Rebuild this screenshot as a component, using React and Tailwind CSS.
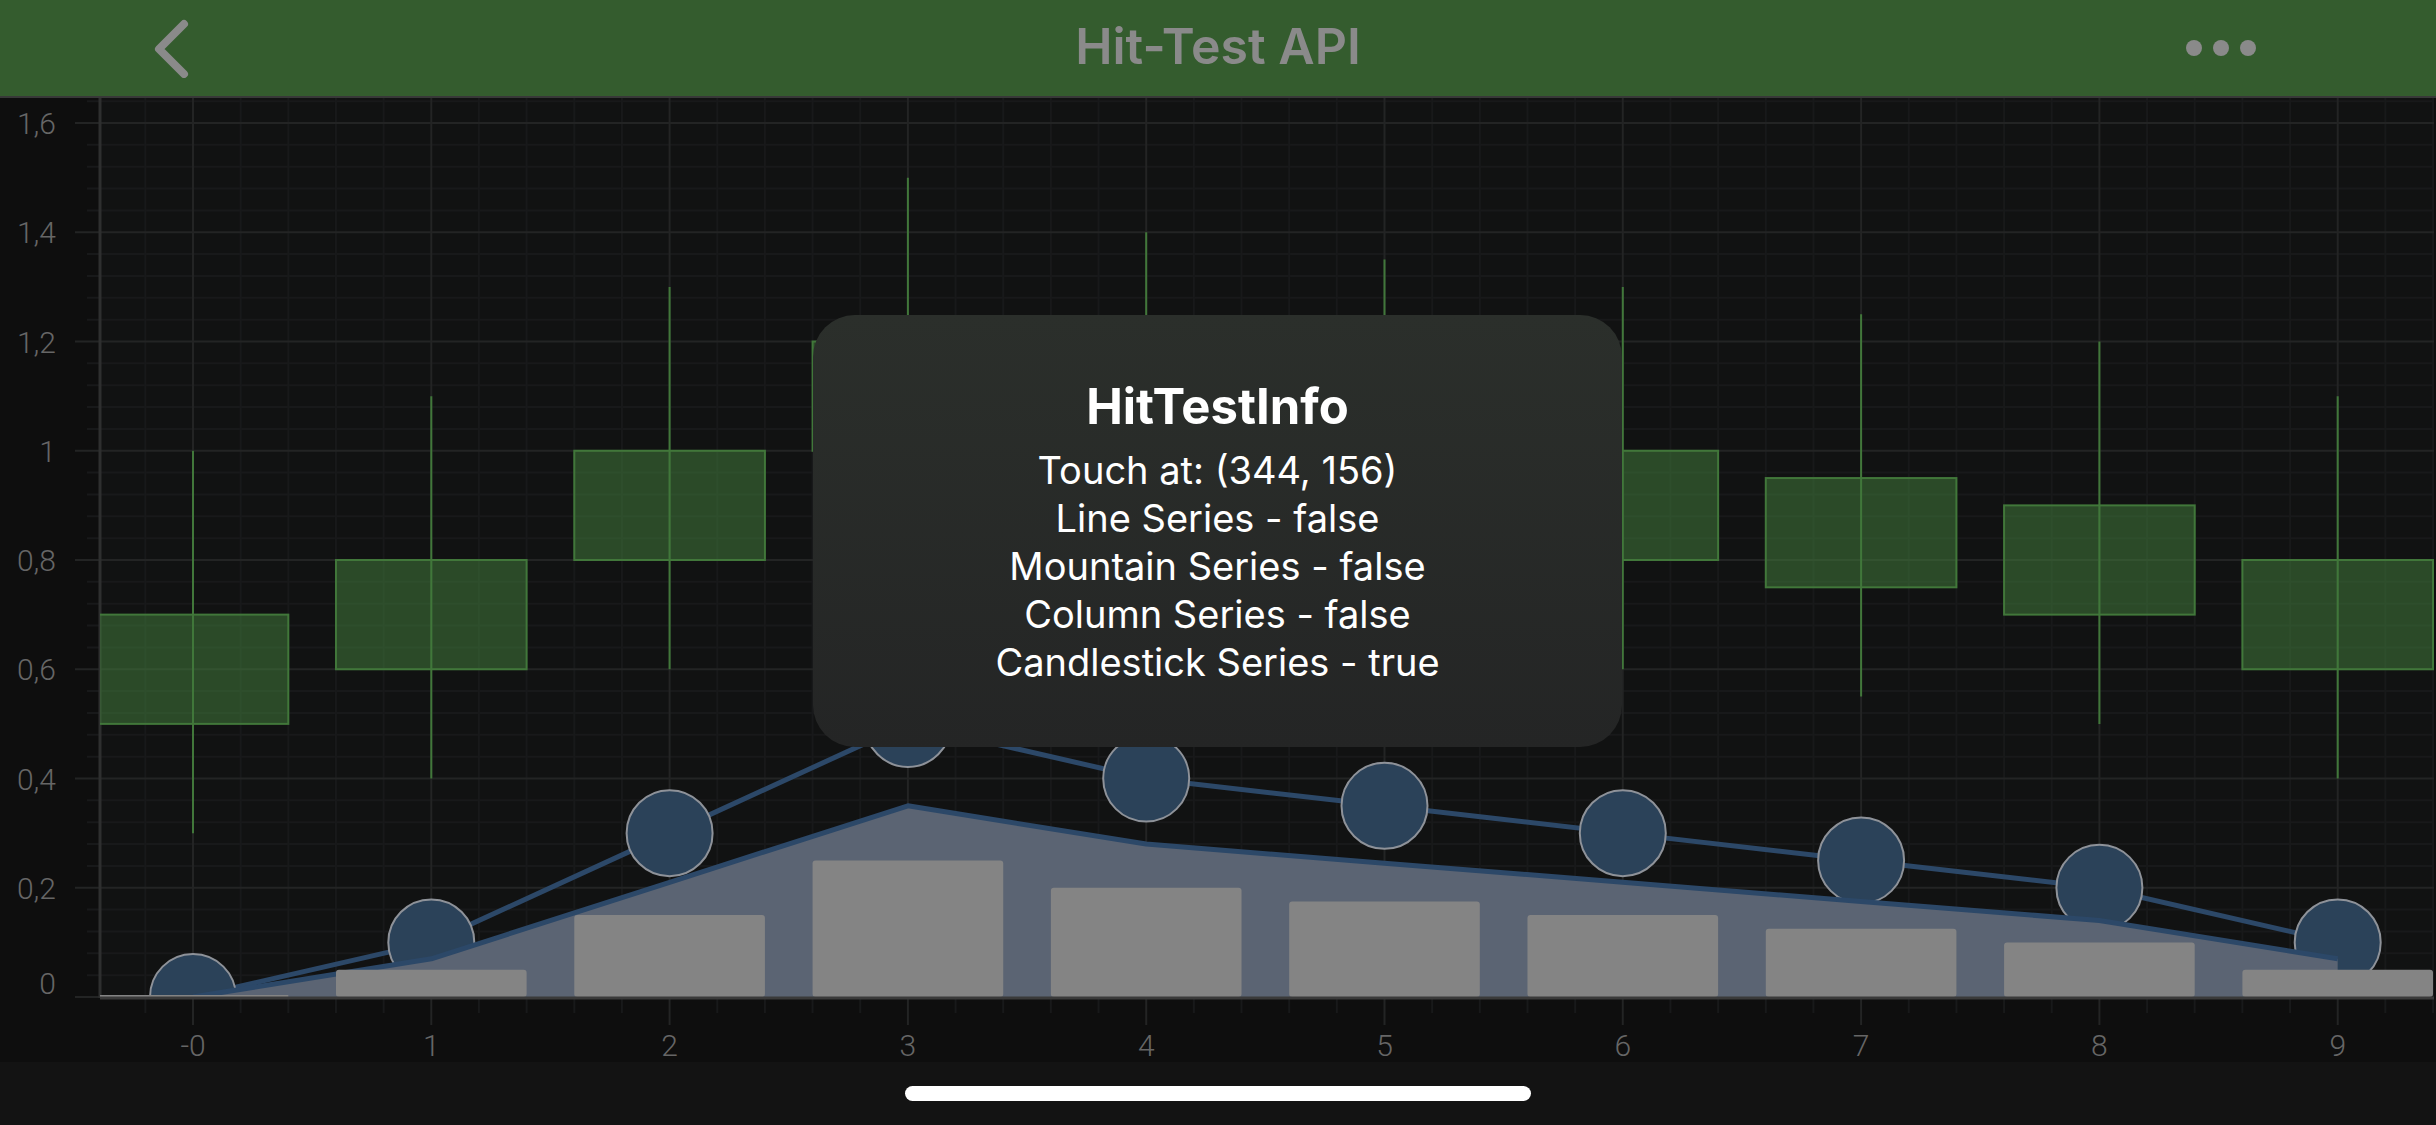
import React from "react"

const X = (i) => 193 + 238.3 * i
const Y = (v) => 997 - 546.25 * v

const lineVals = [0, 0.1, 0.3, 0.5, 0.4, 0.35, 0.3, 0.25, 0.2, 0.1]
const mountainVals = lineVals.map((v) => v * 0.7)
const columnVals = [0, 0.05, 0.15, 0.25, 0.2, 0.175, 0.15, 0.125, 0.1, 0.05]
// open, close, low, high
const candles = [
  [0.5, 0.7, 0.3, 1.0],
  [0.6, 0.8, 0.4, 1.1],
  [0.8, 1.0, 0.6, 1.3],
  [1.0, 1.2, 0.8, 1.5],
  [0.9, 1.1, 0.7, 1.4],
  [0.85, 1.05, 0.65, 1.35],
  [0.8, 1.0, 0.6, 1.3],
  [0.75, 0.95, 0.55, 1.25],
  [0.7, 0.9, 0.5, 1.2],
  [0.6, 0.8, 0.4, 1.1],
]

const yLabels = [
  { v: 1.6, t: "1,6" },
  { v: 1.4, t: "1,4" },
  { v: 1.2, t: "1,2" },
  { v: 1.0, t: "1" },
  { v: 0.8, t: "0,8" },
  { v: 0.6, t: "0,6" },
  { v: 0.4, t: "0,4" },
  { v: 0.2, t: "0,2" },
]

const BAR_W = 238.3 * 0.8

function Chart() {
  const minorH = []
  for (let k = 1; k <= 41; k++) {
    if (k % 5 === 0) continue
    minorH.push(k * 0.04)
  }
  const minorV = []
  for (let i = -1; i <= 9; i++) {
    for (let k = 1; k <= 4; k++) {
      const x = X(i + k / 5)
      if (x > 100 && x < 2434) minorV.push(x)
    }
  }
  const linePts = lineVals.map((v, i) => `${X(i)},${Y(v)}`).join(" ")
  const mountTop = mountainVals.map((v, i) => `${X(i)},${Y(v)}`).join(" ")
  const mountArea = `${X(0)},${Y(0)} ${mountTop} ${X(9)},${Y(0)}`

  return (
    <svg width="2436" height="964" viewBox="0 98 2436 964" className="block">
      <defs>
        <clipPath id="plot">
          <rect x="100" y="98" width="2334" height="900" />
        </clipPath>
      </defs>
      <rect x="0" y="98" width="2436" height="964" fill="#0e0e0e" />
      <rect x="100" y="98" width="2334" height="899" fill="#111212" />

      {/* grid */}
      {minorH.map((v) => (
        <line key={"mh" + v} x1="87" x2="2434" y1={Y(v)} y2={Y(v)} stroke="#18191a" strokeWidth="2" />
      ))}
      {minorV.map((x) => (
        <line key={"mv" + x} x1={x} x2={x} y1="98" y2="1013" stroke="#18191a" strokeWidth="2" />
      ))}
      {yLabels.map((l) => (
        <line key={"h" + l.t} x1="75" x2="2434" y1={Y(l.v)} y2={Y(l.v)} stroke="#232424" strokeWidth="2" />
      ))}
      {lineVals.map((_, i) => (
        <line key={"v" + i} x1={X(i)} x2={X(i)} y1="98" y2="1025" stroke="#232424" strokeWidth="2" />
      ))}
      <line x1="75" x2="100" y1="997" y2="997" stroke="#232424" strokeWidth="2" />
      <line x1="100" x2="100" y1="98" y2="998" stroke="#2e2f2f" strokeWidth="3" />

      <g clipPath="url(#plot)">
        {/* line series */}
        <polyline points={linePts} fill="none" stroke="#2c4868" strokeWidth="5" strokeLinejoin="round" />
        {lineVals.map((v, i) => (
          <circle key={"m" + i} cx={X(i)} cy={Y(v)} r="43" fill="#2b4259" stroke="#8e9299" strokeWidth="2" />
        ))}
        {/* mountain */}
        <polygon points={mountArea} fill="#5b6473" />
        <polyline points={mountTop} fill="none" stroke="#2c4868" strokeWidth="5" strokeLinejoin="round" />
        {/* columns */}
        {columnVals.map((v, i) => (
          <rect
            key={"c" + i}
            x={X(i) - BAR_W / 2}
            y={Y(v) - (v === 0 ? 2 : 0)}
            width={BAR_W}
            height={v === 0 ? 3 : 546.25 * v}
            rx={v === 0 ? 0 : 3}
            fill="#848484"
          />
        ))}
        {/* candles */}
        {candles.map(([o, c, lo, hi], i) => {
          const top = Math.max(o, c)
          const bot = Math.min(o, c)
          return (
            <g key={"k" + i}>
              <line x1={X(i)} x2={X(i)} y1={Y(hi)} y2={Y(lo)} stroke="#41773a" strokeWidth="2" />
              <rect
                x={X(i) - BAR_W / 2}
                y={Y(top)}
                width={BAR_W}
                height={546.25 * (top - bot)}
                fill="#41773a"
                fillOpacity="0.56"
                stroke="#41773a"
                strokeWidth="2"
              />
            </g>
          )
        })}
      </g>

      <line x1="100" x2="2434" y1="998" y2="998" stroke="#3a3a3a" strokeWidth="3" />

      {/* axis labels */}
      <g fill="#666666" fontFamily="Roboto, sans-serif" fontWeight="300" fontSize="30">
        {yLabels.map((l) => (
          <text key={"yl" + l.t} x="56" y={Y(l.v) + 11} textAnchor="end">
            {l.t}
          </text>
        ))}
        <text x="56" y="994" textAnchor="end">0</text>
        {lineVals.map((_, i) => (
          <text key={"xl" + i} x={X(i)} y="1056" textAnchor="middle">
            {i === 0 ? "-0" : i}
          </text>
        ))}
      </g>
    </svg>
  )
}

export default function App() {
  return (
    <div className="w-[2436px] h-[1125px] bg-[#131313] flex flex-col overflow-hidden font-['Inter',sans-serif]">
      {/* Header */}
      <header className="h-[98px] shrink-0 bg-[#345c2e] border-b-2 border-[#383838] grid grid-cols-[1fr_auto_1fr] items-center">
        <div className="pl-[150px] flex items-center">
          <svg width="48" height="60" viewBox="0 0 48 60">
            <polyline
              points="34,6 9,31 34,56"
              fill="none"
              stroke="#8a8a8a"
              strokeWidth="8"
              strokeLinecap="round"
              strokeLinejoin="round"
            />
          </svg>
        </div>
        <h1 className="text-[50px] font-semibold text-[#8a8a8a] leading-none pb-[4px]">Hit-Test API</h1>
        <div className="flex justify-end items-center gap-[11px] pr-[180px]">
          <span className="w-[16px] h-[16px] rounded-full bg-[#8a8a8a]" />
          <span className="w-[16px] h-[16px] rounded-full bg-[#8a8a8a]" />
          <span className="w-[16px] h-[16px] rounded-full bg-[#8a8a8a]" />
        </div>
      </header>

      {/* Chart */}
      <div className="relative h-[964px] shrink-0">
        <Chart />
        <div className="absolute left-[813px] top-[217px] w-[809px] h-[432px] rounded-[42px] bg-linear-to-b from-[#2b2f2b] to-[#242525] flex flex-col items-center pt-[64px] text-white">
          <h2 className="text-[49px] font-bold leading-[56px]">HitTestInfo</h2>
          <div className="mt-[11px] flex flex-col items-center text-[38px] leading-[48px]">
            <p>Touch at: (344, 156)</p>
            <p>Line Series - false</p>
            <p>Mountain Series - false</p>
            <p>Column Series - false</p>
            <p>Candlestick Series - true</p>
          </div>
        </div>
      </div>

      {/* Home indicator */}
      <div className="flex-1 flex justify-center pt-[24px]">
        <div className="w-[626px] h-[15px] rounded-full bg-white" />
      </div>
    </div>
  )
}
